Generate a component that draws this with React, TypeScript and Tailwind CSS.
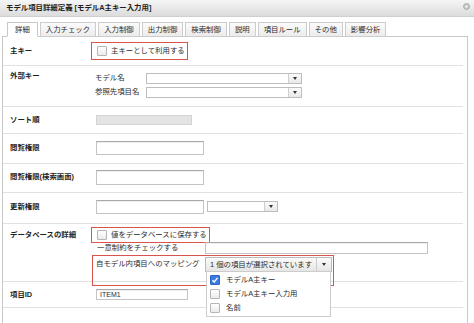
import React from 'react';

const tabs = ['詳細', '入力チェック', '入力制御', '出力制御', '検索制御', '説明', '項目ルール', 'その他', '影響分析'];

const Box = ({ checked = false }: { checked?: boolean }) =>
  checked ? (
    <span className="w-[10px] h-[10px] shrink-0 rounded-[1px] bg-[#3b7be0] border border-[#2d65c2] flex items-center justify-center">
      <svg viewBox="0 0 10 10" className="w-[8px] h-[8px]">
        <path d="M1.8 5.2 L4 7.4 L8.2 2.4" fill="none" stroke="#fff" strokeWidth="1.7" />
      </svg>
    </span>
  ) : (
    <span className="w-[10px] h-[10px] shrink-0 rounded-[1px] border border-[#b5b5b5] bg-gradient-to-b from-white to-[#ebebeb]" />
  );

const Arrow = () => (
  <span className="w-0 h-0 border-l-[2.5px] border-r-[2.5px] border-t-[3px] border-l-transparent border-r-transparent border-t-[#333]" />
);

const Select = ({ className }: { className: string }) => (
  <div className={`flex border border-[#bdbdbd] bg-white ${className}`}>
    <div className="flex-1" />
    <div className="w-[13px] border-l border-[#cfcfcf] bg-gradient-to-b from-[#fafafa] to-[#e9e9e9] flex items-center justify-center">
      <Arrow />
    </div>
  </div>
);

const Input = ({ className, value }: { className: string; value?: string }) => (
  <div className={`border border-[#c4c4c4] border-t-[#a9a9a9] bg-white shadow-[inset_0_1px_1px_rgba(0,0,0,0.07)] flex items-center pl-[3px] text-[7px] ${className}`}>
    {value}
  </div>
);

const Label = ({ children }: { children: React.ReactNode }) => (
  <div className="w-[86px] shrink-0 font-bold text-[#1f1f1f]">{children}</div>
);

export default function App() {
  return (
    <div className="w-[474px] h-[323px] overflow-hidden bg-white text-[7.4px] leading-[10px] text-[#2b2b2b] font-['Liberation_Sans','Noto_Sans_CJK_JP',sans-serif]">
      <div className="h-[17px] flex items-center justify-between pl-[6px] pr-[4px] bg-gradient-to-b from-[#f6f6f6] to-[#dcdcdc] border-b border-[#cfcfcf]">
        <span className="font-bold text-[#1f1f1f]">モデル項目詳細定義 [モデルA主キー入力用]</span>
        <svg viewBox="0 0 8 8" className="w-[7px] h-[7px] -mt-[3px]">
          <circle cx="4" cy="4" r="3.4" fill="#c8c8c8" stroke="#9a9a9a" strokeWidth="0.8" />
          <circle cx="4" cy="4" r="1.4" fill="#eeeeee" />
        </svg>
      </div>

      <div className="ml-[2px] w-[466px] pt-[5px]">
        <div className="flex gap-[2px] pl-[5px] relative z-10 -mb-px">
          {tabs.map((t, i) => (
            <div
              key={t}
              className={
                i === 0
                  ? 'h-[15px] px-[7px] flex items-center border border-[#c8c8c8] border-b-white bg-white'
                  : 'h-[15px] px-[5px] flex items-center border border-[#cccccc] bg-gradient-to-b from-[#fbfbfb] to-[#ececec]'
              }
            >
              {t}
            </div>
          ))}
        </div>

        <div className="border-l border-r border-t border-[#c8c8c8] h-[300px]">
          <div className="mr-[4px]">
            <div className="h-[29px] border-b border-[#e1e1e1] flex items-center pl-[7px]">
              <Label>主キー</Label>
              <div className="-ml-[5px] h-[18px] w-[97px] border border-[#d9544d] flex items-center gap-[4px] pl-[5px]">
                <Box />
                <span>主キーとして利用する</span>
              </div>
            </div>

            <div className="h-[41px] border-b border-[#e1e1e1] flex pl-[7px] pt-[5px]">
              <Label>外部キー</Label>
              <div className="-ml-[1px] flex flex-col">
                <div className="h-[14px] flex items-center">
                  <span className="w-[51px]">モデル名</span>
                  <Select className="w-[156px] h-[11px]" />
                </div>
                <div className="h-[14px] flex items-center">
                  <span className="w-[51px]">参照先項目名</span>
                  <Select className="w-[156px] h-[11px]" />
                </div>
              </div>
            </div>

            <div className="h-[27px] border-b border-[#e1e1e1] flex items-center pl-[7px]">
              <Label>ソート順</Label>
              <div className="w-[96px] h-[10px] bg-[#e4e4e4] border border-[#d4d4d4]" />
            </div>

            <div className="h-[30px] border-b border-[#e1e1e1] flex items-center pl-[7px] pb-[2px]">
              <Label>閲覧権限</Label>
              <Input className="w-[108px] h-[14px]" />
            </div>

            <div className="h-[29px] border-b border-[#e1e1e1] flex items-center pl-[7px] pb-[2px]">
              <Label>閲覧権限(検索画面)</Label>
              <Input className="w-[108px] h-[15px]" />
            </div>

            <div className="h-[31px] border-b border-[#e1e1e1] flex items-center pl-[7px] pb-[3px]">
              <Label>更新権限</Label>
              <Input className="w-[108px] h-[14px]" />
              <Select className="ml-[3px] w-[71px] h-[11px]" />
            </div>

            <div className="relative h-[58px] border-b border-[#e1e1e1] flex pl-[7px] pt-[3px]">
              <div className="w-[86px] shrink-0 font-bold text-[#1f1f1f] pt-[3px]">データベースの詳細</div>
              <div className="-ml-[5px] flex flex-col">
                <div className="h-[16px] w-[119px] border border-[#d9544d] flex items-center gap-[4px] pl-[5px]">
                  <Box />
                  <span>値をデータベースに保存する</span>
                </div>
                <div className="-mt-[1px] h-[12px] flex items-center pl-[6px]">
                  <span className="w-[108px]">一意制約をチェックする</span>
                  <Input className="w-[223px] h-[12px]" />
                </div>
                <div className="mt-[3px] h-[15px] flex items-center pl-[5px]">
                  <span className="w-[109px] self-start pt-[2px]">自モデル内項目へのマッピング</span>
                  <div className="relative w-[127px] h-[15px] flex border border-[#bbbbbb] bg-gradient-to-b from-[#fbfbfb] to-[#e6e6e6]">
                    <div className="flex-1 flex items-center pl-[4px]">1 個の項目が選択されています</div>
                    <div className="w-[15px] border-l border-[#cccccc] flex items-center justify-center">
                      <Arrow />
                    </div>
                    <div className="absolute z-20 left-0 top-full w-[125px] bg-white border border-[#cccccc] py-[1px]">
                      {[
                        { t: 'モデルA主キー', c: true },
                        { t: 'モデルA主キー入力用', c: false },
                        { t: '名前', c: false },
                      ].map((o) => (
                        <div key={o.t} className="h-[14px] flex items-center pl-[3px] gap-[6px]">
                          <Box checked={o.c} />
                          <span>{o.t}</span>
                        </div>
                      ))}
                    </div>
                  </div>
                </div>
              </div>
              <div className="absolute z-10 left-[89px] top-[31px] w-[242px] h-[31px] border border-[#d9544d] pointer-events-none" />
            </div>

            <div className="h-[26px] border-b border-[#e1e1e1] flex items-center pl-[7px]">
              <Label>項目ID</Label>
              <Input className="w-[92px] h-[11px]" value="ITEM1" />
            </div>
          </div>
        </div>
      </div>
    </div>
  );
}
